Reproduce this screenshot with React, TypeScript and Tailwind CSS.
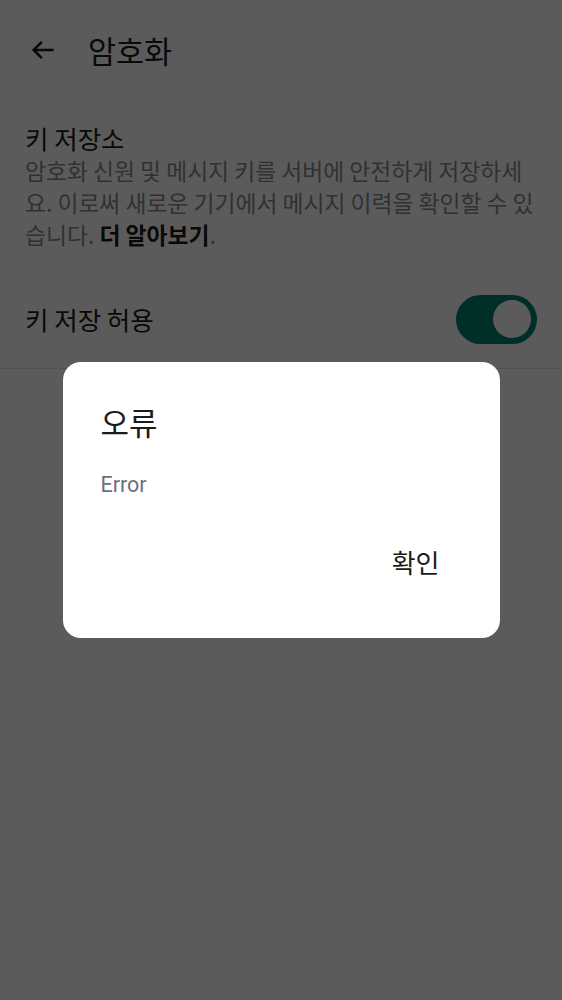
import React from "react";

export default function App() {
  const font = { fontFamily: '"Noto Sans CJK KR", "Noto Sans", Roboto, sans-serif' };
  return (
    <div className="relative w-full h-[1000px] bg-white overflow-hidden" style={font}>
      <div className="flex items-center h-[100px] pl-[29px]">
        <svg width="28" height="28" viewBox="0 0 24 24" fill="none" stroke="#1b1b1b" strokeWidth="2.2" strokeLinecap="square">
          <path d="M20 12H5" />
          <path d="M11 5l-7 7 7 7" strokeLinecap="butt" />
        </svg>
        <div className="ml-[31px] text-[30.5px] text-[#1b1b1b] leading-none">암호화</div>
      </div>
      <div className="px-[25px] pt-[21px]">
        <div className="text-[25.5px] leading-[34px] text-[#1b1b1b]">키 저장소</div>
        <div className="text-[22.8px] leading-[32px] text-[#8a8a8a]">
          암호화 신원 및 메시지 키를 서버에 안전하게 저장하세요. 이로써 새로운 기기에서 메시지 이력을 확인할 수 있습니다.{" "}
          <span className="font-bold text-[#1b1b1b]">더 알아보기</span>.
        </div>
      </div>
      <div className="mt-[34px] pb-[15px] border-b border-[#e4e4e4]">
        <div className="flex items-center justify-between px-[25px] h-[68px]">
          <div className="text-[25.5px] text-[#1b1b1b]">키 저장 허용</div>
          <div className="w-[81px] h-[49px] rounded-full bg-[#00856f] flex items-center justify-end pr-[6px]">
            <div className="w-[38px] h-[38px] rounded-full bg-white" />
          </div>
        </div>
      </div>

      <div className="absolute inset-0 bg-[rgba(0,0,0,0.643)] flex items-center justify-center">
        <div className="w-[437px] h-[276px] bg-white rounded-[18px] flex flex-col px-[38px] pt-[40px]">
          <div className="text-[31px] leading-[40px] text-[#1b1b1b]">오류</div>
          <div className="mt-[29px] text-[21.5px] leading-[28px] text-[#6b7079]" style={{ fontFamily: 'Roboto, "Noto Sans", sans-serif' }}>Error</div>
          <div className="flex justify-end mt-[48px] pr-[22px]">
            <div className="text-[26px] leading-[30px] text-[#1b1b1b]">확인</div>
          </div>
        </div>
      </div>
    </div>
  );
}
